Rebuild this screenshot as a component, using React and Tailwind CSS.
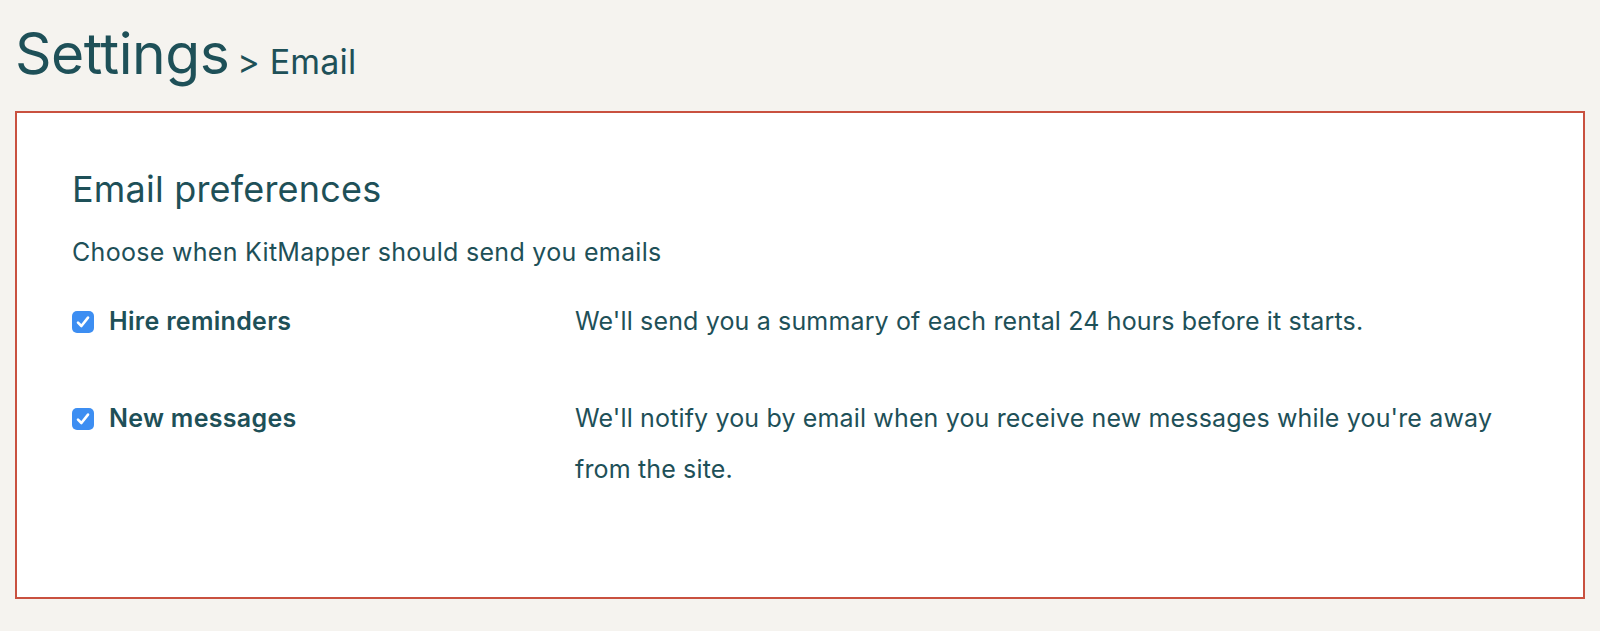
import React, { useState } from 'react';

function Check({ checked, onChange }) {
  return (
    <button
      type="button"
      onClick={onChange}
      className={`flex h-[22px] w-[22px] shrink-0 items-center justify-center rounded-[5px] ${
        checked ? 'bg-[#3d8ef2]' : 'border border-gray-400 bg-white'
      }`}
    >
      {checked && (
        <svg width="18" height="18" viewBox="0 0 18 18" fill="none">
          <path d="M4 9.6 L7.4 13 L14 4.6" stroke="white" strokeWidth="2.6" strokeLinecap="round" strokeLinejoin="round" />
        </svg>
      )}
    </button>
  );
}

const prefs = [
  {
    id: 'hire',
    label: 'Hire reminders',
    text: "We'll send you a summary of each rental 24 hours before it starts.",
  },
  {
    id: 'messages',
    label: 'New messages',
    text: "We'll notify you by email when you receive new messages while you're away from the site.",
  },
];

export default function App() {
  const [on, setOn] = useState({ hire: true, messages: true });

  return (
    <div className="min-h-screen bg-[#f5f3ef] px-[15px] pb-8 text-[#1e5058] font-['Inter',sans-serif]">
      <h1 className="flex items-baseline pt-[14px] h-[111px]">
        <span className="text-[57px] leading-[80px] tracking-[-0.5px]">Settings</span>
        <span className="ml-[8px] text-[34px] tracking-[0.2px]">&gt; Email</span>
      </h1>

      <section className="h-[488px] border-2 border-[#c9513f] bg-white px-[55px] pt-[52px]">
        <h2 className="text-[36px] leading-[48px] tracking-[0.2px]">Email preferences</h2>
        <p className="mt-[16px] text-[25px] leading-[47px] tracking-[0.3px]">Choose when KitMapper should send you emails</p>

        <div className="mt-[20px] flex flex-col gap-[46px]">
          {prefs.map((p) => (
            <div key={p.id} className="flex items-start">
              <label className="flex w-[503px] shrink-0 items-center gap-[15px] h-[51px]">
                <Check checked={on[p.id]} onChange={() => setOn({ ...on, [p.id]: !on[p.id] })} />
                <span className="text-[25px] font-semibold tracking-[0.3px]">{p.label}</span>
              </label>
              <p className="flex-1 text-[25px] leading-[51px] tracking-[0.15px]">{p.text}</p>
            </div>
          ))}
        </div>
      </section>
    </div>
  );
}
